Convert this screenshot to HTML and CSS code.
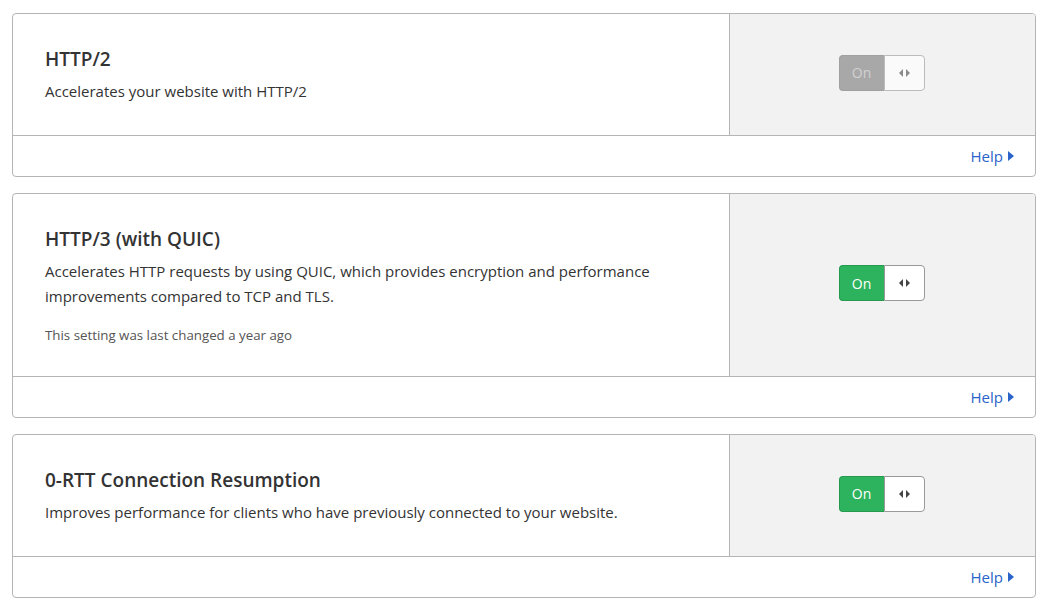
FILE: index.html
```html
<!DOCTYPE html>
<html>
<head>
<meta charset="utf-8">
<link rel="stylesheet" href="styles.css">
</head>
<body>
<div class="card">
  <div class="card-main">
    <div class="info">
      <h3 class="title">HTTP/2</h3>
      <p class="desc">Accelerates your website with HTTP/2</p>
    </div>
    <div class="control">
      <div class="toggle toggle-disabled">
        <span class="toggle-on">On</span>
        <span class="toggle-knob"><span class="arr-l"></span><span class="arr-r"></span></span>
      </div>
    </div>
  </div>
  <div class="card-footer"><a class="help" href="#">Help <span class="caret"></span></a></div>
</div>

<div class="card">
  <div class="card-main">
    <div class="info">
      <h3 class="title">HTTP/3 (with QUIC)</h3>
      <p class="desc desc-wide">Accelerates HTTP requests by using QUIC, which provides encryption and performance improvements compared to TCP and TLS.</p>
      <p class="meta">This setting was last changed a year ago</p>
    </div>
    <div class="control">
      <div class="toggle">
        <span class="toggle-on">On</span>
        <span class="toggle-knob"><span class="arr-l"></span><span class="arr-r"></span></span>
      </div>
    </div>
  </div>
  <div class="card-footer"><a class="help" href="#">Help <span class="caret"></span></a></div>
</div>

<div class="card">
  <div class="card-main">
    <div class="info">
      <h3 class="title">0-RTT Connection Resumption</h3>
      <p class="desc">Improves performance for clients who have previously connected to your website.</p>
    </div>
    <div class="control">
      <div class="toggle">
        <span class="toggle-on">On</span>
        <span class="toggle-knob"><span class="arr-l"></span><span class="arr-r"></span></span>
      </div>
    </div>
  </div>
  <div class="card-footer"><a class="help" href="#">Help <span class="caret"></span></a></div>
</div>
</body>
</html>
```

FILE: styles.css
```css
html, body {
  margin: 0;
  padding: 0;
  background: #fff;
}
body {
  padding: 13px 12px 0 12px;
  font-family: "Open Sans", "Noto Sans", sans-serif;
  color: #333;
}
.card {
  border: 1px solid #b5b5b5;
  border-radius: 4px;
  margin-bottom: 16px;
  overflow: hidden;
  background: #fff;
}
.card-main {
  display: flex;
}
.info {
  flex: 1;
  padding: 33px 40px 31px 32px;
}
.title {
  margin: 0;
  font-size: 19px;
  line-height: 24px;
  font-weight: 600;
  color: #333;
}
.desc {
  margin: 8px 0 0 0;
  font-size: 15px;
  line-height: 25px;
  color: #333;
}
.desc-wide {
  max-width: 625px;
}
.meta {
  margin: 16px 0 0 0;
  font-size: 13.3px;
  line-height: 20px;
  color: #555;
}
.control {
  width: 305px;
  flex: none;
  background: #f2f2f2;
  border-left: 1px solid #b5b5b5;
  display: flex;
  align-items: center;
  justify-content: center;
}
.toggle {
  display: flex;
  height: 36px;
  width: 86px;
  box-sizing: border-box;
  margin: -4px 2px 0 0;
}
.toggle-on {
  width: 45px;
  box-sizing: border-box;
  background: #2db35d;
  border: 1px solid #259a4f;
  border-right: none;
  border-radius: 4px 0 0 4px;
  color: #fff;
  font-size: 14px;
  display: flex;
  align-items: center;
  justify-content: center;
}
.toggle-knob {
  flex: 1;
  box-sizing: border-box;
  background: #fff;
  border: 1px solid #999;
  border-radius: 0 4px 4px 0;
  display: flex;
  align-items: center;
  justify-content: center;
  gap: 3px;
}
.arr-l, .arr-r {
  width: 0;
  height: 0;
  border-top: 4px solid transparent;
  border-bottom: 4px solid transparent;
}
.arr-l { border-right: 4px solid #444; }
.arr-r { border-left: 4px solid #444; }
.toggle-disabled .toggle-on {
  background: #a8a8a8;
  border-color: #a0a0a0;
  color: #d2d2d2;
}
.toggle-disabled .toggle-knob {
  background: #fafafa;
  border-color: #bcbcbc;
}
.toggle-disabled .arr-l { border-right-color: #8a8a8a; }
.toggle-disabled .arr-r { border-left-color: #8a8a8a; }
.card-footer {
  border-top: 1px solid #b5b5b5;
  height: 40px;
  display: flex;
  align-items: center;
  justify-content: flex-end;
  padding-right: 21px;
}
.help {
  color: #2a63c9;
  text-decoration: none;
  font-size: 15px;
  display: flex;
  align-items: center;
  gap: 5px;
}
.caret {
  width: 0;
  height: 0;
  border-top: 5px solid transparent;
  border-bottom: 5px solid transparent;
  border-left: 6px solid #2a63c9;
}
```
